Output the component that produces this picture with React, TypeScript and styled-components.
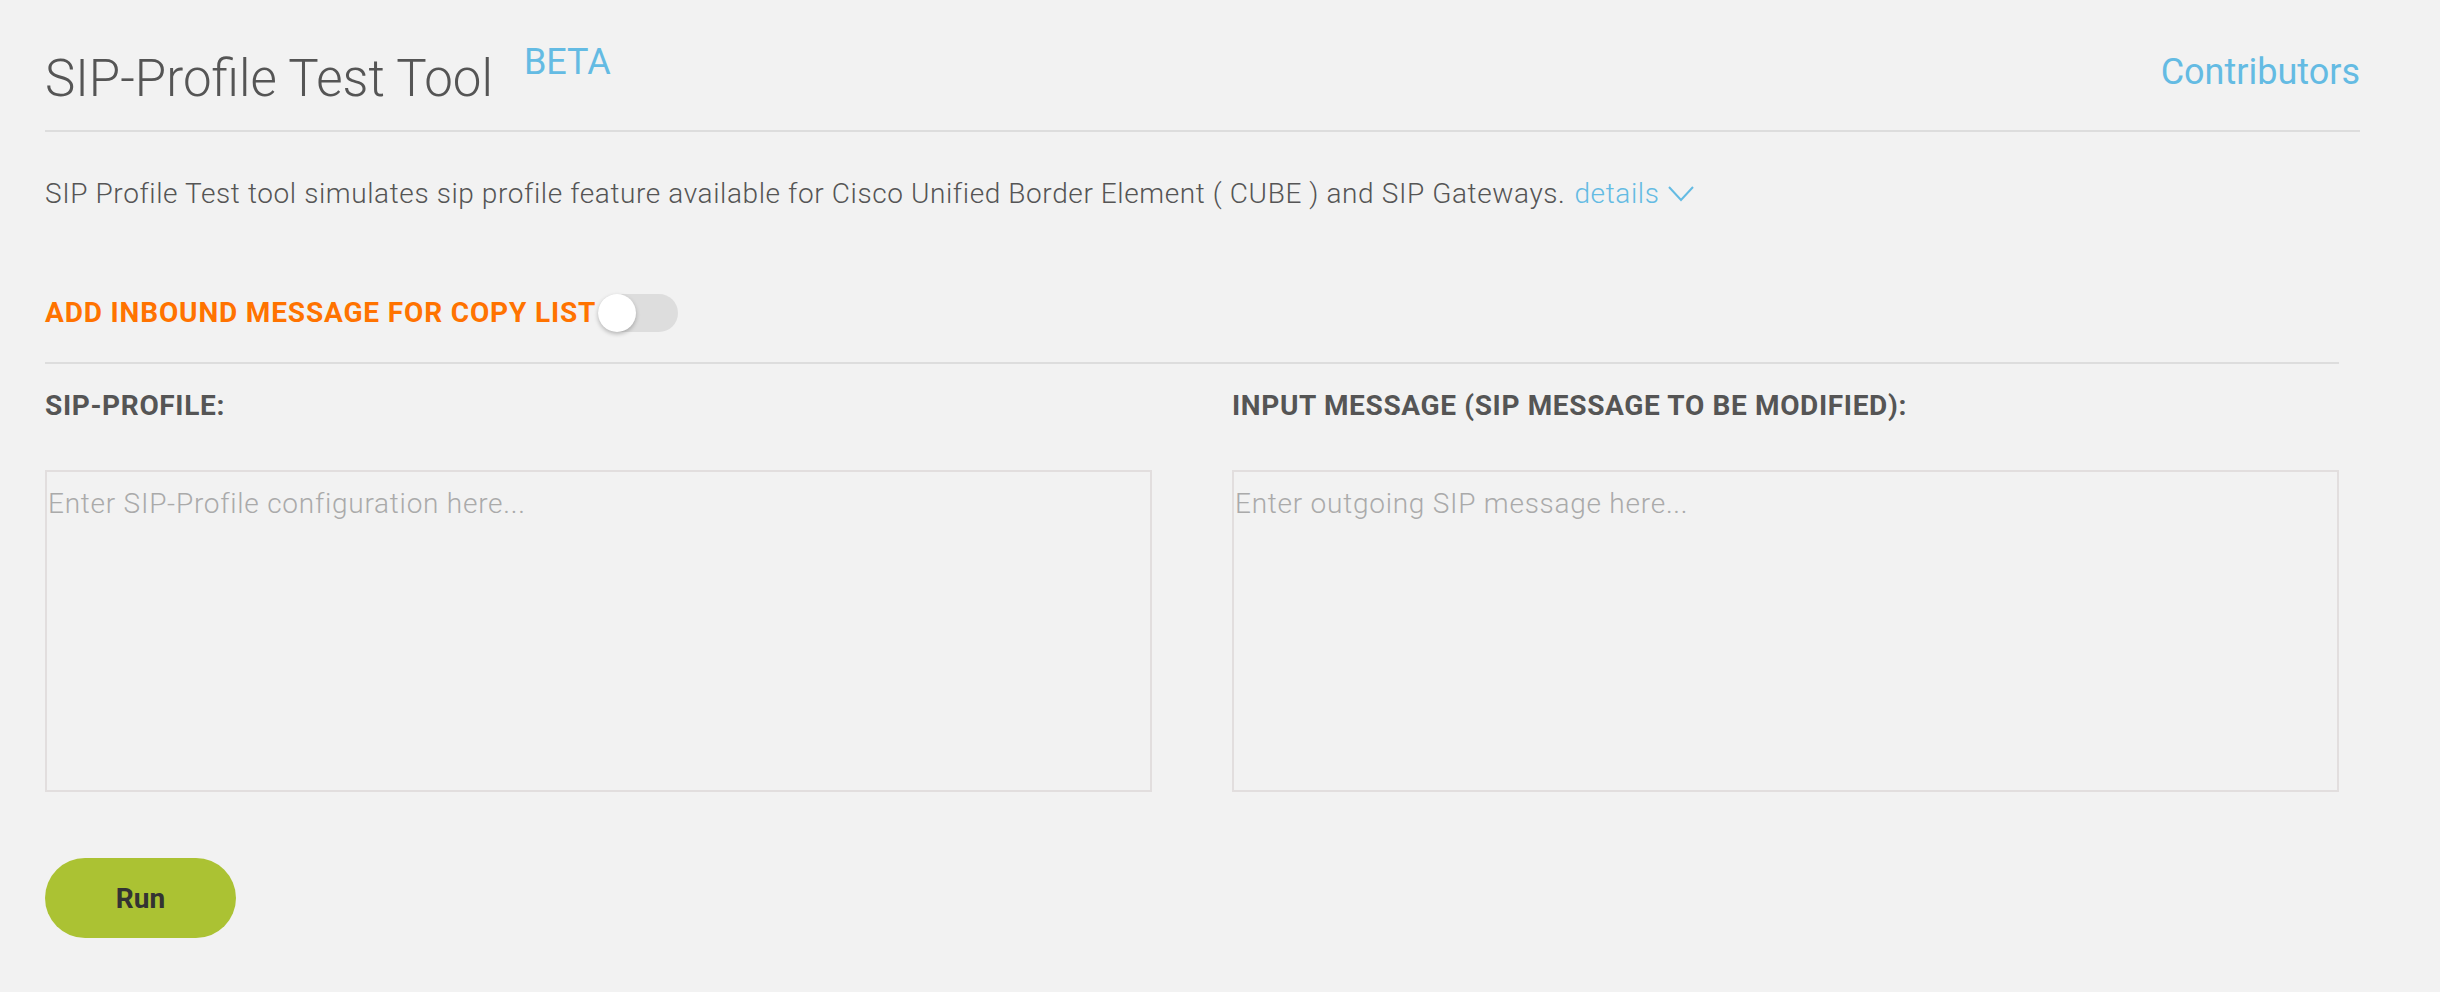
import React, { useState } from 'react';
import styled, { createGlobalStyle } from 'styled-components';

const GlobalStyle = createGlobalStyle`
  body {
    margin: 0;
    background: #f2f2f2;
    font-family: Roboto, "Liberation Sans", sans-serif;
    color: #555;
  }
`

const PageWrap = styled.div`
  padding: 0 80px 60px 45px;
`

const Header = styled.div`
  display: flex;
  justify-content: space-between;
  align-items: flex-start;
  padding-top: 44px;
  padding-bottom: 25px;
  border-bottom: 2px solid #dddddd;
`

const TitleRow = styled.div`
  display: flex;
  align-items: flex-start;
  gap: 31px;
`

const Title = styled.h1`
  margin: 9px 0 0;
  font-size: 51px;
  line-height: 52px;
  font-weight: 300;
  color: #555;
`

const Beta = styled.span`
  font-size: 36px;
  line-height: 36px;
  color: #64bbe3;
`

const Contributors = styled.a`
  margin-top: 10px;
  font-size: 36px;
  line-height: 36px;
  color: #64bbe3;
  text-decoration: none;
  cursor: pointer;
`

const Description = styled.p`
  margin: 48px 0 0;
  font-size: 28px;
  line-height: 28px;
  font-weight: 300;
  letter-spacing: 0.6px;
  color: #555;
  display: flex;
  align-items: center;

  a{
    color: #64bbe3;
    margin-left: 9px;
    cursor: pointer;
  }
  svg{
    margin-left: 9px;
  }
`

const FormArea = styled.div`
  margin-right: 21px;
`

const ToggleRow = styled.div`
  display: flex;
  align-items: center;
  margin-top: 86px;
  padding-bottom: 30px;
  border-bottom: 2px solid #dddddd;
`

const ToggleLabel = styled.span`
  font-size: 28px;
  line-height: 28px;
  font-weight: 700;
  color: #ff7300;
  letter-spacing: 0.85px;
`

const Track = styled.button<{ on: boolean }>`
  position: relative;
  margin-left: 2px;
  width: 80px;
  height: 38px;
  border: none;
  padding: 0;
  border-radius: 19px;
  background: ${p => (p.on ? '#abc233' : '#dddddd')};
  cursor: pointer;
`

const Knob = styled.span<{ on: boolean }>`
  position: absolute;
  top: 0;
  left: ${p => (p.on ? '42px' : '0')};
  width: 38px;
  height: 38px;
  border-radius: 50%;
  background: #fff;
  box-shadow: 0 2px 4px rgba(0, 0, 0, 0.25);
`

const Columns = styled.div`
  display: grid;
  grid-template-columns: 1fr 1fr;
  column-gap: 80px;
  margin-top: 28px;
`

const Field = styled.div`
  display: flex;
  flex-direction: column;
`

const FieldLabel = styled.label`
  font-size: 28px;
  line-height: 28px;
  font-weight: 700;
  color: #555;
  letter-spacing: 0.65px;
  margin-bottom: 50px;
`

const TextBox = styled.textarea`
  box-sizing: border-box;
  height: 322px;
  border: 2px solid #e2dede;
  background: transparent;
  padding: 11px 1px;
  font-family: Roboto, "Liberation Sans", sans-serif;
  font-size: 28px;
  font-weight: 300;
  line-height: 42px;
  letter-spacing: 0.75px;
  color: #555;
  resize: none;
  outline: none;

  &::placeholder{
    color: #aaa;
  }
`

const RunButton = styled.button`
  margin-top: 66px;
  width: 191px;
  height: 80px;
  border: none;
  border-radius: 40px;
  background: #abc233;
  font-family: Roboto, "Liberation Sans", sans-serif;
  font-size: 28px;
  font-weight: 700;
  color: #333;
  cursor: pointer;
`

const App: React.FC = () => {
  const [inbound, setInbound] = useState(false)

  return (
    <PageWrap>
      <GlobalStyle />
      <Header>
        <TitleRow>
          <Title>SIP-Profile Test Tool</Title>
          <Beta>BETA</Beta>
        </TitleRow>
        <Contributors>Contributors</Contributors>
      </Header>
      <Description>
        SIP Profile Test tool simulates sip profile feature available for Cisco Unified Border Element ( CUBE ) and SIP Gateways.
        <a>details</a>
        <svg width="26" height="16" viewBox="0 0 26 16">
          <path d="M1 1 L13 14 L25 1" fill="none" stroke="#64bbe3" strokeWidth="2" />
        </svg>
      </Description>
      <FormArea>
        <ToggleRow>
          <ToggleLabel>ADD INBOUND MESSAGE FOR COPY LIST</ToggleLabel>
          <Track on={inbound} onClick={() => setInbound(!inbound)}>
            <Knob on={inbound} />
          </Track>
        </ToggleRow>
        <Columns>
          <Field>
            <FieldLabel>SIP-PROFILE:</FieldLabel>
            <TextBox placeholder="Enter SIP-Profile configuration here..." />
          </Field>
          <Field>
            <FieldLabel>INPUT MESSAGE (SIP MESSAGE TO BE MODIFIED):</FieldLabel>
            <TextBox placeholder="Enter outgoing SIP message here..." />
          </Field>
        </Columns>
        <RunButton>Run</RunButton>
      </FormArea>
    </PageWrap>
  );
}

export default App;
